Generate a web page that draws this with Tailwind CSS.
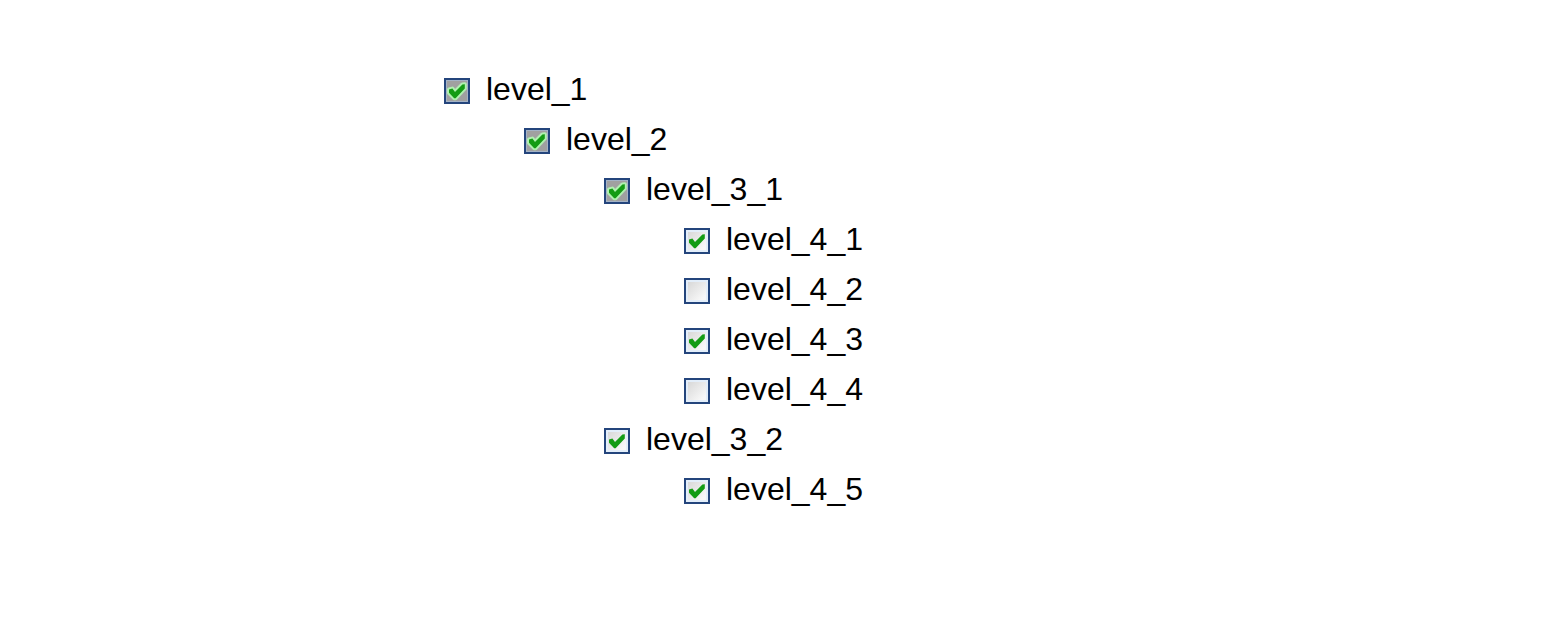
<!DOCTYPE html>
<html lang="en">
<head>
<meta charset="utf-8">
<meta name="viewport" content="width=device-width, initial-scale=1">
<title>Checkbox tree</title>
<script src="https://cdn.jsdelivr.net/npm/@tailwindcss/browser@4"></script>
</head>
<body class="bg-white text-black">
<svg class="hidden" aria-hidden="true">
  <symbol id="tick" viewBox="0 0 26 26">
    <path d="M5 11.4 L8.4 10.6 L11 14 L18.4 6.4 L20.8 6.2 L20.8 10.4 L11.6 20.2 L10.2 20.2 L5 14.8 Z"/>
  </symbol>
</svg>
<main class="mx-auto w-full max-w-[666px] pt-16 font-['Liberation_Sans',Arial,sans-serif] text-[32px] leading-[50px]">
  <ul id="tree"></ul>
</main>
<template id="node">
  <li>
    <label class="flex w-fit items-center gap-4">
      <span class="mt-1 grid size-[26px] shrink-0">
        <input type="checkbox" class="peer col-start-1 row-start-1 size-[26px] appearance-none border-2 border-[#24457c] bg-linear-to-br from-[#d4d4d4] to-[#f8f8f8] to-80% shadow-[inset_0_0_0_2px_#e3eefa] indeterminate:bg-none indeterminate:bg-[#a0a0a0] indeterminate:shadow-[inset_0_0_0_1px_#a3b2c6]">
        <svg class="pointer-events-none invisible col-start-1 row-start-1 size-[26px] fill-[#149c14] stroke-none [paint-order:stroke] peer-checked:visible peer-indeterminate:visible peer-indeterminate:stroke-[#b0f0b0] peer-indeterminate:stroke-4" stroke-linejoin="round" aria-hidden="true"><use href="#tick"/></svg>
      </span>
      <span class="name"></span>
    </label>
    <ul class="pl-20"></ul>
  </li>
</template>
<script>
  const data = [
    { name: 'level_1', state: 'mixed', children: [
      { name: 'level_2', state: 'mixed', children: [
        { name: 'level_3_1', state: 'mixed', children: [
          { name: 'level_4_1', state: 'on' },
          { name: 'level_4_2', state: 'off' },
          { name: 'level_4_3', state: 'on' },
          { name: 'level_4_4', state: 'off' }
        ] },
        { name: 'level_3_2', state: 'on', children: [
          { name: 'level_4_5', state: 'on' }
        ] }
      ] }
    ] }
  ];
  const template = document.getElementById('node');
  function render(items, list) {
    for (const item of items) {
      const row = template.content.cloneNode(true);
      const box = row.querySelector('input');
      const label = row.querySelector('label');
      box.id = item.name;
      label.htmlFor = item.name;
      box.checked = item.state === 'on';
      box.indeterminate = item.state === 'mixed';
      row.querySelector('.name').textContent = item.name;
      const sub = row.querySelector('ul');
      if (item.children) render(item.children, sub);
      else sub.remove();
      list.append(row);
    }
  }
  render(data, document.getElementById('tree'));
</script>
</body>
</html>
